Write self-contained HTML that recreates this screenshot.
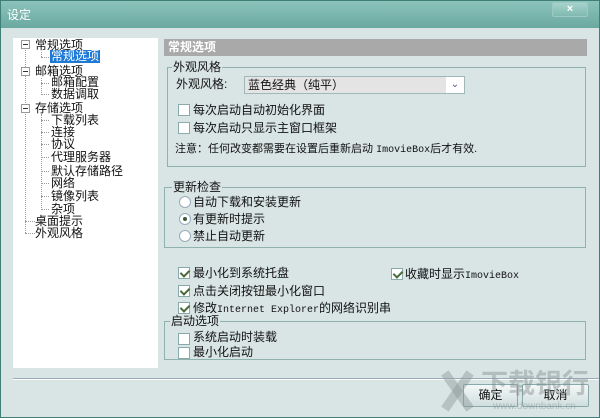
<!DOCTYPE html><html><head><meta charset="utf-8"><style>
*{margin:0;padding:0;box-sizing:border-box}
body{width:600px;height:418px;overflow:hidden;background:#fff;font-family:"Liberation Sans","Noto Sans CJK SC",sans-serif;font-size:12px;color:#111}
.win{position:absolute;left:0;top:0;width:600px;height:418px;background:#d9e5e5;border:1px solid #3f7f78}
.title{position:absolute;left:0;top:0;width:598px;height:27px;background:linear-gradient(#8cc4bc,#6aa9a0);color:#fff;font-size:12px;line-height:28px;padding-left:6px}
.close{position:absolute;left:551px;top:1px;width:36px;height:15px;border:1px solid #9cc9c2;border-radius:2px;background:linear-gradient(#a6d3cc,#7fb9b1);color:#fff;text-align:center;font-size:11px;line-height:13px;font-weight:bold}
.a{position:absolute;white-space:nowrap;line-height:13px}
.tree{position:absolute;left:12px;top:37px;width:145px;height:330px;background:#fff}
.hdr{position:absolute;left:163px;top:38px;width:423px;height:17px;background:#a9a9a9;color:#fff;font-weight:bold;line-height:17px;padding-left:4px}
.grp{position:absolute;border:1px solid #8fb2ae}
.gt{position:absolute;background:#d9e5e5;padding:0 1px;line-height:13px}
.cb{position:absolute;width:12px;height:12px;border:1px solid #8aa;background:#fff}
.cb.k::after{content:"";position:absolute;left:3px;top:0px;width:4px;height:7px;border:solid #4a6a3a;border-width:0 2px 2px 0;transform:rotate(45deg)}
.rb{position:absolute;width:12px;height:12px;border:1px solid #9ab;border-radius:50%;background:#fff}
.rb.k::after{content:"";position:absolute;left:3px;top:3px;width:4px;height:4px;border-radius:50%;background:#3a5a3a}
.btn{position:absolute;height:23px;border:1px solid #8aa;border-radius:2px;background:linear-gradient(#f4f8f8,#d0dede);text-align:center;line-height:21px}
.dot{position:absolute;border-left:1px dotted #999}
.dh{position:absolute;border-top:1px dotted #999;width:8px}
.ex{position:absolute;width:9px;height:9px;border:1px solid #999;background:#fff}
.ex::after{content:"";position:absolute;left:1px;top:3px;width:5px;height:1px;background:#333}
.wm{position:absolute;background:rgba(140,150,150,.45)}
</style></head><body><div class="win">
<div class="title">设定</div><div class="close">×</div>
<div class="tree">
<div class="dot" style="left:12px;top:12px;height:183px"></div>
<div class="dot" style="left:28px;top:14px;height:5px"></div>
<div class="dot" style="left:28px;top:40px;height:17px"></div>
<div class="dot" style="left:28px;top:76px;height:96px"></div>
<div class="ex" style="left:8px;top:2px"></div>
<div class="ex" style="left:8px;top:29px"></div>
<div class="ex" style="left:8px;top:66px"></div>
<div class="dh" style="left:28px;top:19px"></div>
<div class="dh" style="left:28px;top:45px"></div><div class="dh" style="left:28px;top:56px"></div>
<div class="dh" style="left:28px;top:82px"></div><div class="dh" style="left:28px;top:94px"></div><div class="dh" style="left:28px;top:106px"></div><div class="dh" style="left:28px;top:119px"></div><div class="dh" style="left:28px;top:133px"></div><div class="dh" style="left:28px;top:145px"></div><div class="dh" style="left:28px;top:158px"></div><div class="dh" style="left:28px;top:171px"></div>
<div class="dh" style="left:12px;top:183px;width:10px"></div><div class="dh" style="left:12px;top:195px;width:10px"></div>
<div class="a" style="left:22px;top:1px">常规选项</div>
<div class="a" style="left:37px;top:12px;background:#1e78d6;color:#fff;padding:0 1px">常规选项</div>
<div class="a" style="left:22px;top:27px">邮箱选项</div>
<div class="a" style="left:38px;top:38px">邮箱配置</div>
<div class="a" style="left:38px;top:50px">数据调取</div>
<div class="a" style="left:22px;top:64px">存储选项</div>
<div class="a" style="left:38px;top:76px">下载列表</div>
<div class="a" style="left:38px;top:88px">连接</div>
<div class="a" style="left:38px;top:100px">协议</div>
<div class="a" style="left:38px;top:113px">代理服务器</div>
<div class="a" style="left:38px;top:127px">默认存储路径</div>
<div class="a" style="left:38px;top:139px">网络</div>
<div class="a" style="left:38px;top:152px">镜像列表</div>
<div class="a" style="left:38px;top:165px">杂项</div>
<div class="a" style="left:22px;top:177px">桌面提示</div>
<div class="a" style="left:22px;top:189px">外观风格</div>
</div>
<div class="hdr">常规选项</div>
<div class="grp" style="left:166px;top:66px;width:419px;height:100px"></div>
<div class="gt" style="left:171px;top:60px">外观风格</div>
<div class="a" style="left:175px;top:77px">外观风格:</div>
<div style="position:absolute;left:243px;top:75px;width:221px;height:18px;border:1px solid #a0b8b8;background:#e4e4e4"></div>
<div style="position:absolute;left:445px;top:76px;width:18px;height:16px;background:#fff;color:#557;text-align:center;font-size:10px;line-height:16px">&#8964;</div>
<div class="a" style="left:247px;top:78px">蓝色经典（纯平）</div>
<div class="cb" style="left:177px;top:103px"></div><div class="a" style="left:192px;top:103px">每次启动自动初始化界面</div>
<div class="cb" style="left:177px;top:121px"></div><div class="a" style="left:192px;top:121px">每次启动只显示主窗口框架</div>
<div class="a" style="left:174px;top:142px;font-size:11px">注意：任何改变都需要在设置后重新启动 <span style="font-family:'Liberation Mono';font-size:10px">ImovieBox</span>后才有效.</div>
<div class="grp" style="left:163px;top:186px;width:422px;height:61px"></div>
<div class="gt" style="left:171px;top:180px">更新检查</div>
<div class="rb" style="left:178px;top:195px"></div><div class="a" style="left:192px;top:195px">自动下载和安装更新</div>
<div class="rb k" style="left:178px;top:212px"></div><div class="a" style="left:192px;top:212px">有更新时提示</div>
<div class="rb" style="left:178px;top:229px"></div><div class="a" style="left:192px;top:229px">禁止自动更新</div>
<div class="cb k" style="left:177px;top:266px"></div><div class="a" style="left:192px;top:266px">最小化到系统托盘</div>
<div class="cb k" style="left:390px;top:267px"></div><div class="a" style="left:404px;top:267px">收藏时显示<span style="font-family:'Liberation Mono';font-size:10px">ImovieBox</span></div>
<div class="cb k" style="left:177px;top:284px"></div><div class="a" style="left:192px;top:284px">点击关闭按钮最小化窗口</div>
<div class="cb k" style="left:177px;top:301px"></div><div class="a" style="left:192px;top:301px">修改<span style="font-family:'Liberation Mono';font-size:10px">Internet Explorer</span>的网络识别串</div>
<div class="grp" style="left:163px;top:320px;width:422px;height:39px"></div>
<div class="gt" style="left:169px;top:314px">启动选项</div>
<div class="cb" style="left:177px;top:332px"></div><div class="a" style="left:192px;top:330px">系统启动时装载</div>
<div class="cb" style="left:177px;top:346px"></div><div class="a" style="left:192px;top:345px">最小化启动</div>
<div style="position:absolute;left:12px;top:377px;width:586px;height:2px;border-top:1px solid #9ab;border-bottom:1px solid #fff"></div>
<div class="btn" style="left:462px;top:383px;width:55px">确定</div>
<div class="btn" style="left:521px;top:383px;width:67px">取消</div>
<div class="wm" style="left:452px;top:368px;width:9px;height:44px;transform:rotate(-35deg)"></div>
<div class="wm" style="left:452px;top:368px;width:9px;height:44px;transform:rotate(35deg)"></div>
<div class="a" style="left:480px;top:368px;font-size:27px;line-height:30px;color:rgba(130,140,140,.45);font-weight:bold">下载银行</div>
<div class="a" style="left:492px;top:399px;font-size:10px;color:rgba(130,140,140,.45)">www.downbank.cn</div>
</div></body></html>
